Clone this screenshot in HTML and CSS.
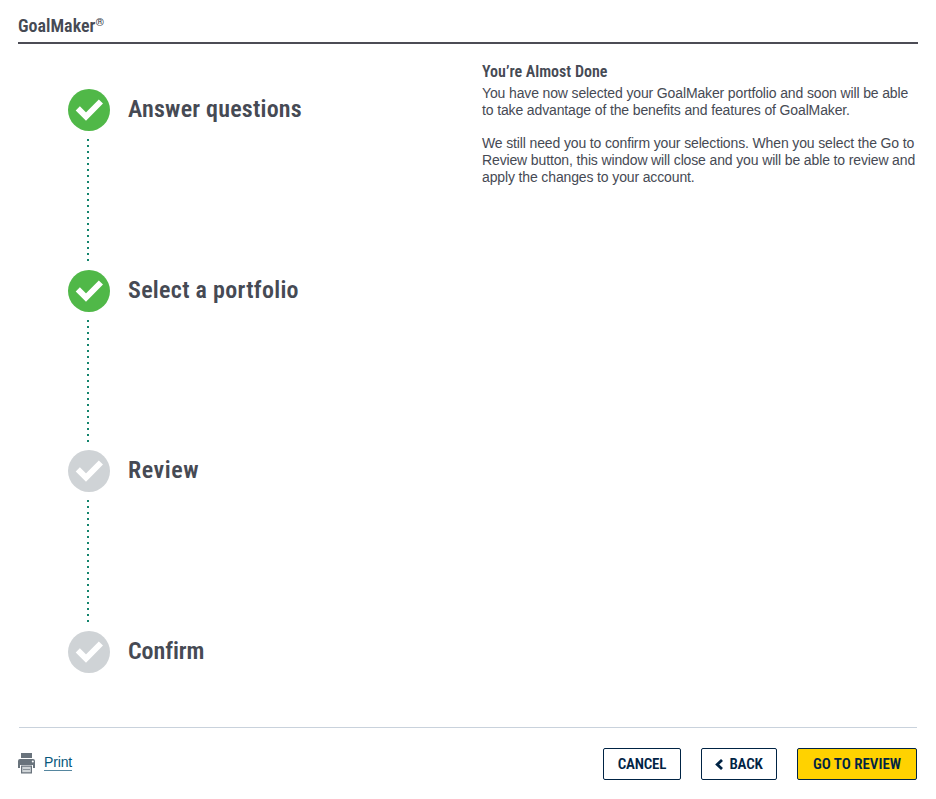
FILE: index.html
```html
<!DOCTYPE html>
<html lang="en">
<head>
<meta charset="utf-8">
<title>GoalMaker</title>
<link rel="stylesheet" href="styles.css">
</head>
<body>
<svg class="defs" aria-hidden="true"><symbol id="check" viewBox="0 0 42 42"><circle cx="21" cy="21" r="21"/><path d="M9.8 19.3 18 27.5 32.9 12.5" fill="none" stroke="#fff" stroke-width="5.9"/></symbol></svg>
<div class="page">
  <header class="header"><h1 class="title"><span class="brand">GoalMaker</span><span class="reg">®</span></h1></header>
  <main class="main">
    <ol class="steps">
      <li class="step done"><div class="marker"><svg class="check"><use href="#check"/></svg><span class="dots"></span></div><h2 class="label answer">Answer questions</h2></li>
      <li class="step done short"><div class="marker"><svg class="check"><use href="#check"/></svg><span class="dots"></span></div><h2 class="label select">Select a portfolio</h2></li>
      <li class="step"><div class="marker"><svg class="check"><use href="#check"/></svg><span class="dots"></span></div><h2 class="label review">Review</h2></li>
      <li class="step"><div class="marker"><svg class="check"><use href="#check"/></svg></div><h2 class="label confirm">Confirm</h2></li>
    </ol>
    <section class="message">
      <h3 class="subtitle">You’re Almost Done</h3>
      <p>You have now selected your GoalMaker portfolio and soon will be able<br>to take advantage of the benefits and features of GoalMaker.</p>
      <p>We still need you to confirm your selections. When you select the Go to<br>Review button, this window will close and you will be able to review and<br>apply the changes to your account.</p>
    </section>
  </main>
  <footer class="footer">
    <a class="print"><svg class="printer" viewBox="0 0 18 21"><path fill="#69737c" d="M3 0h11v5H3zM2 6h13q2 0 2 2v7h-2v-3H2v3H0V8q0-2 2-2z"/><circle cx="14.8" cy="8.6" r="1" fill="#fff"/><path d="M3.6 13.1h9.8v6.8H3.6z" fill="#d0d5d8" stroke="#69737c" stroke-width="1.2"/><path d="M5 16.5h7" stroke="#8c949a"/></svg><span class="print-label">Print</span></a>
    <div class="actions">
      <button class="btn cancel"><span>CANCEL</span></button>
      <button class="btn back"><svg class="chevron" viewBox="0 0 8 11"><path d="M7 1 2.2 5.5 7 10" fill="none" stroke="#002344" stroke-width="2.8"/></svg><span>BACK</span></button>
      <button class="btn primary"><span>GO TO REVIEW</span></button>
    </div>
  </footer>
</div>
</body>
</html>
```
FILE: styles.css
```css
* { box-sizing: border-box; }
body { margin: 0; background: #fff; color: #464a54; font-family: "Liberation Sans", sans-serif; }
h1, h2, h3, p, ol { margin: 0; padding: 0; }
h1, h2, h3, .btn { font-family: "Roboto Condensed", "Liberation Sans Narrow", "Liberation Sans", sans-serif; font-weight: 600; }
.defs { display: block; width: 0; height: 0; }
.page { height: 799px; padding: 0 18px; display: flex; flex-direction: column; }
.header { height: 44px; padding-top: 15px; border-bottom: 2px solid #4c4c55; }
.title { font-size: 18px; line-height: 22px; display: flex; }
.reg { font-size: 11px; line-height: 15px; }
.main { height: 683px; display: flex; }
.steps { list-style: none; flex: none; width: 464px; padding: 45px 0 0 50px; }
.step { height: 181px; display: flex; gap: 18px; color: #cfd3d6; }
.short { height: 180px; }
.done { color: #50b848; }
.marker { width: 42px; }
.check { display: block; width: 42px; height: 42px; fill: currentColor; }
.dots { display: block; width: 2px; height: 122px; margin: 8px 0 0 19px; background: repeating-linear-gradient(#14856d 0 2px, transparent 2px 6px); }
.label { color: #464a54; font-size: 24px; line-height: 28px; padding-top: 6px; white-space: nowrap; font-variant-ligatures: none; }
.answer { letter-spacing: 0.22px; }
.select { letter-spacing: 0.3px; }
.review { letter-spacing: 0.55px; }
.confirm { letter-spacing: -0.05px; }
.message { padding-top: 18px; font-size: 14px; line-height: 17px; letter-spacing: -0.135px; white-space: nowrap; }
.subtitle { font-size: 16px; line-height: 20px; margin-bottom: 3px; letter-spacing: 0; }
.message p + p { margin-top: 16px; }
.footer { height: 72px; margin: 0 1px; border-top: 1px solid #c9d2dc; display: flex; justify-content: space-between; }
.print { display: flex; margin: 25px 0 0 -1px; gap: 8px; }
.printer { width: 18px; height: 21px; }
.print-label { height: 18px; font-size: 14px; line-height: 19px; letter-spacing: -0.135px; color: #07577c; border-bottom: 1px solid #55869f; }
.actions { display: flex; gap: 20px; padding-top: 20px; }
.btn { display: flex; align-items: center; justify-content: center; height: 32px; padding: 0; border: 1px solid #002344; border-radius: 2px; background: #fff; color: #002344; font-size: 15px; line-height: 30px; white-space: nowrap; }
.cancel { width: 78px; letter-spacing: -0.2px; }
.back { width: 76px; gap: 6px; letter-spacing: -0.2px; }
.chevron { width: 8px; height: 11px; }
.primary { width: 120px; background: #ffd200; }
```
